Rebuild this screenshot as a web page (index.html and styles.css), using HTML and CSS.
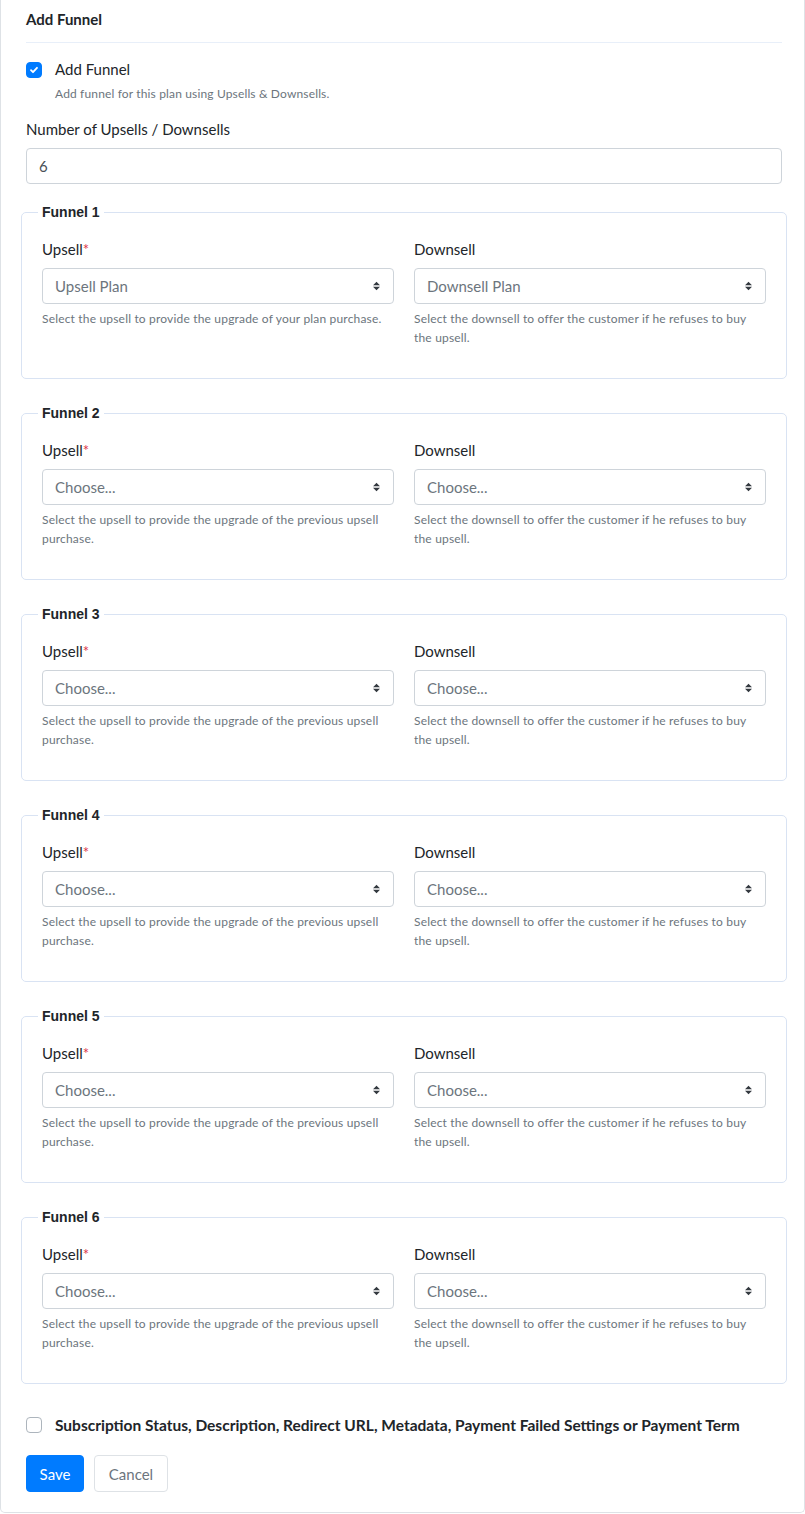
FILE: index.html
```html
<!DOCTYPE html>
<html lang="en">
<head>
    <meta charset="UTF-8">
    <meta name="viewport" content="width=device-width, initial-scale=1.0">
    <title>Add Funnel</title>
    <link rel="stylesheet" href="styles.css">
</head>
<body>
    <div class="card">
        <h3 class="card-title">Add Funnel</h3>

        <div class="check-row">
            <span class="checkbox checked">
                <svg width="10" height="10" viewBox="0 0 10 10"><path d="M2 5.2l2 2 4-4.4" fill="none" stroke="#fff" stroke-width="1.8" stroke-linecap="round" stroke-linejoin="round"/></svg>
            </span>
            <div>
                <div class="check-label">Add Funnel</div>
                <div class="check-help">Add funnel for this plan using Upsells &amp; Downsells.</div>
            </div>
        </div>

        <label class="field-label">Number of Upsells / Downsells</label>
        <div class="input">6</div>

        <div id="funnels"></div>

        <div class="check-row bottom">
            <span class="checkbox"></span>
            <div class="bold-label">Subscription Status, Description, Redirect URL, Metadata, Payment Failed Settings or Payment Term</div>
        </div>

        <div class="actions">
            <button class="btn btn-primary">Save</button>
            <button class="btn btn-light">Cancel</button>
        </div>
    </div>

    <script>
        var arrow = '<svg width="9" height="12" viewBox="0 0 9 12"><path d="M4.5 1.8L8 5.2H1z M4.5 10.2L8 6.8H1z" fill="#343a40"/></svg>';
        var html = '';
        for (var i = 1; i <= 6; i++) {
            var upValue = i === 1 ? 'Upsell Plan' : 'Choose...';
            var downValue = i === 1 ? 'Downsell Plan' : 'Choose...';
            var upHelp = i === 1
                ? 'Select the upsell to provide the upgrade of your plan purchase.'
                : 'Select the upsell to provide the upgrade of the previous upsell purchase.';
            html += '<fieldset class="funnel"><legend>Funnel ' + i + '</legend>' +
                '<div class="cols">' +
                '<div class="col"><div class="field-label">Upsell<span class="req">*</span></div>' +
                '<div class="select"><span>' + upValue + '</span>' + arrow + '</div>' +
                '<div class="help">' + upHelp + '</div></div>' +
                '<div class="col"><div class="field-label">Downsell</div>' +
                '<div class="select"><span>' + downValue + '</span>' + arrow + '</div>' +
                '<div class="help">Select the downsell to offer the customer if he refuses to buy the upsell.</div></div>' +
                '</div></fieldset>';
        }
        document.getElementById("funnels").innerHTML = html;
    </script>
</body>
</html>
```

FILE: styles.css
```css
body {
    margin: 0;
    font-family: "Lato", "Open Sans", sans-serif;
    color: #212529;
    background: #fff;
    overflow: hidden;
}
.card {
    border: 1px solid #dee2e6;
    border-top: none;
    border-radius: 0 0 5px 5px;
    padding: 0 22px 20px 25px;
}
.card-title {
    margin: 0;
    padding: 10px 0 14px;
    font-size: 15px;
    font-weight: 700;
    border-bottom: 1px solid #e8eff9;
}
.check-row {
    display: flex;
    align-items: flex-start;
    gap: 13px;
    margin-top: 18px;
}
.checkbox {
    flex: none;
    width: 14px;
    height: 14px;
    border: 1px solid #adb5bd;
    border-radius: 4px;
    display: flex;
    align-items: center;
    justify-content: center;
    margin-top: 1px;
}
.checkbox.checked {
    background: #007bff;
    border-color: #007bff;
}
.check-label {
    font-size: 15px;
    line-height: 16px;
}
.check-help {
    font-size: 12px;
    color: #6c757d;
    margin-top: 9px;
    letter-spacing: 0.15px;
}
.field-label {
    display: block;
    font-size: 15px;
    margin-top: 18px;
    line-height: 20px;
}
.input {
    margin-top: 9px;
    height: 34px;
    border: 1px solid #ced4da;
    border-radius: 4px;
    padding: 0 12px;
    display: flex;
    align-items: center;
    font-size: 15px;
    color: #495057;
}
.funnel {
    margin: 20px -5px 26px -5px;
    padding: 0 20px 31px;
    border: 1px solid #d9e3f3;
    border-radius: 5px;
}
.funnel + .funnel {
    margin-top: 0;
}
.funnel legend {
    font-family: "Liberation Sans", Arial, sans-serif;
    font-weight: 700;
    font-size: 14px;
    padding: 0 4px;
    margin-left: -4px;
}
.cols {
    display: grid;
    grid-template-columns: 1fr 1fr;
    gap: 20px;
}
.funnel .field-label {
    margin-top: 19px;
}
.req {
    color: #dc3545;
}
.select {
    margin-top: 9px;
    height: 34px;
    border: 1px solid #ced4da;
    border-radius: 4px;
    padding: 0 12px 0 12px;
    display: flex;
    align-items: center;
    justify-content: space-between;
    font-size: 15px;
    color: #6c757d;
}
.help {
    margin-top: 5px;
    font-size: 12px;
    letter-spacing: 0.18px;
    line-height: 19px;
    color: #6c757d;
}
.check-row.bottom {
    margin-top: 32px;
    align-items: center;
    gap: 13px;
}
.check-row.bottom .checkbox {
    margin-top: 0;
}
.bold-label {
    font-family: "Lato", sans-serif;
    font-weight: 700;
    font-size: 15.5px;
}
.actions {
    display: flex;
    gap: 10px;
    margin-top: 21px;
}
.btn {
    height: 37px;
    border-radius: 4px;
    font-family: "Lato", "Open Sans", sans-serif;
    font-size: 15px;
    padding: 0 12px;
    cursor: pointer;
}
.btn-primary {
    background: #007bff;
    border: 1px solid #007bff;
    color: #fff;
    width: 58px;
}
.btn-light {
    background: #fff;
    border: 1px solid #dee2e6;
    color: #6c757d;
    width: 74px;
}
```
